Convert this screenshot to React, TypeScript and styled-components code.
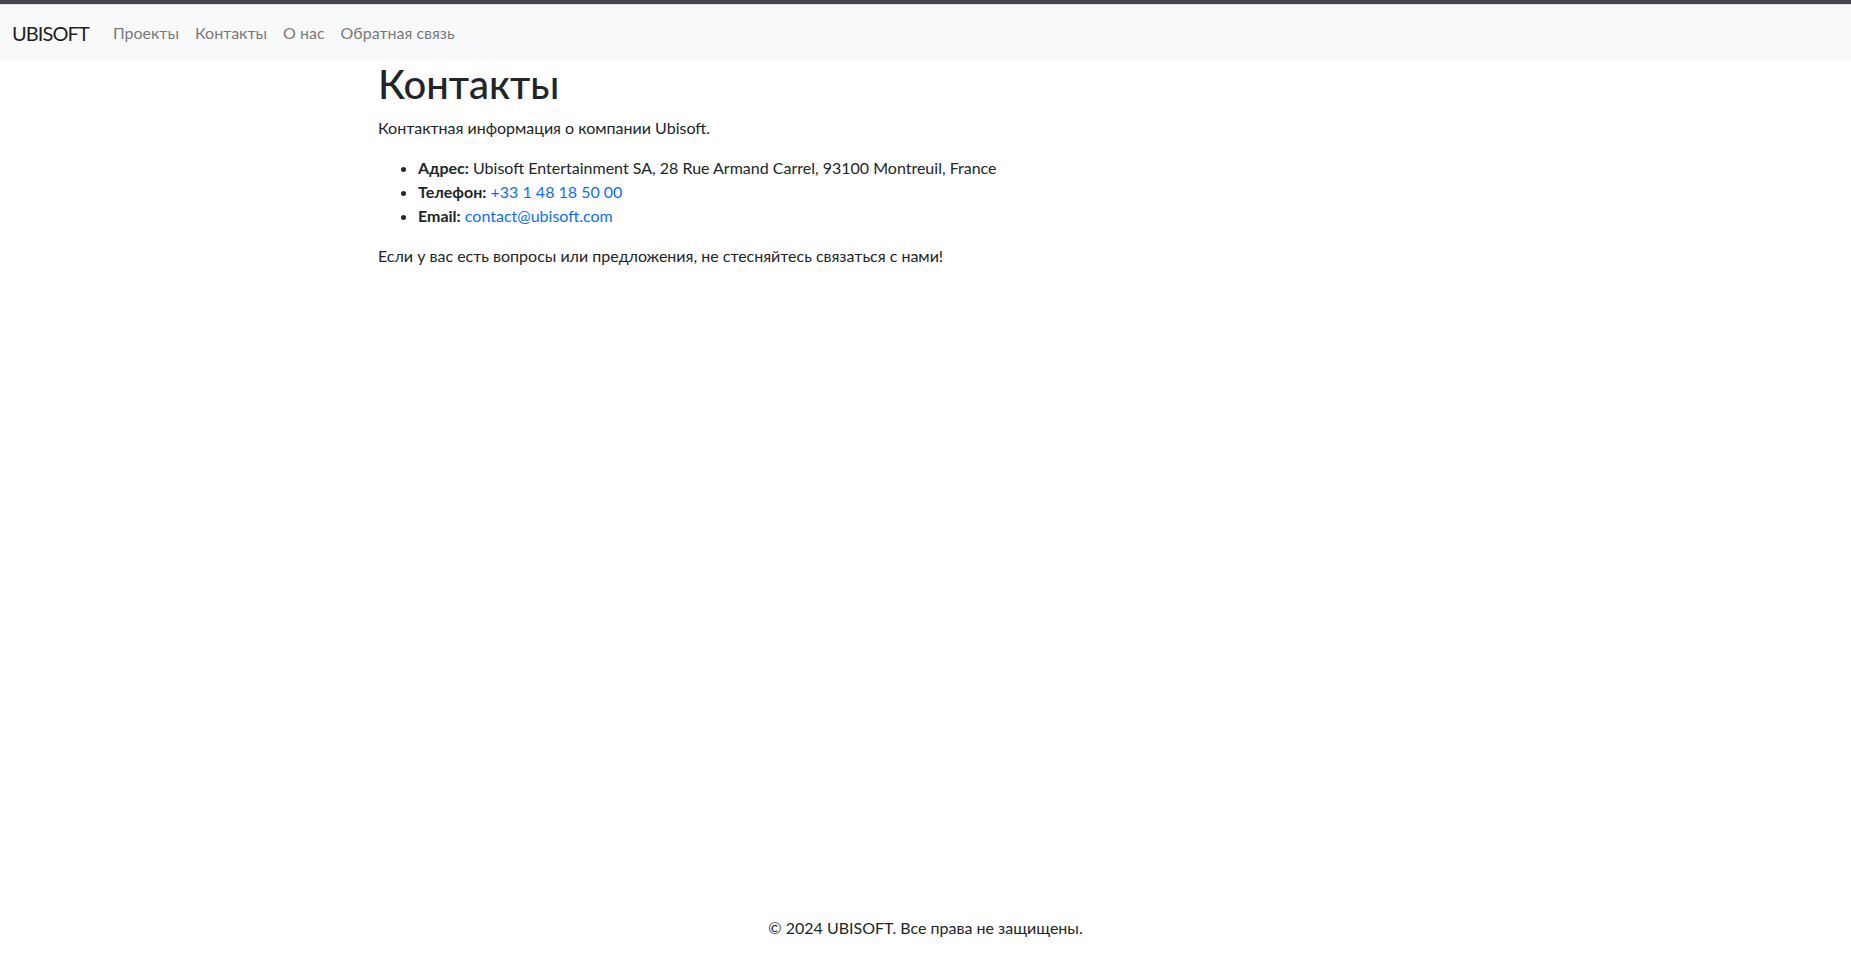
import React from "react";
import styled, { createGlobalStyle } from "styled-components";

const FONT = `Lato, "Segoe UI", Roboto, sans-serif`;

const Global = createGlobalStyle`
  html, body { margin: 0; padding: 0; }
  body {
    font-family: ${FONT};
    font-size: 16px;
    line-height: 1.5;
    color: #212529;
    background: #fff;
  }
  * { box-sizing: border-box; }
`;

const Page = styled.div`
  min-height: 955px;
  display: flex;
  flex-direction: column;
`;

const TopStrip = styled.div`
  height: 5px;
  background: #45454f;
  border-bottom: 1px solid #dcdde0;
`;

const Navbar = styled.nav`
  background: #f8f9fa;
  height: 55px;
  display: flex;
  align-items: center;
  padding: 0 12px;
`;

const Brand = styled.a`
  font-size: 20px;
  letter-spacing: -0.9px;
  color: rgba(0, 0, 0, 0.9);
  text-decoration: none;
  margin-right: 16px;
  line-height: 30px;
`;

const NavList = styled.ul`
  display: flex;
  list-style: none;
  margin: 0;
  padding: 0;
`;

const NavLink = styled.a`
  display: block;
  padding: 8px;
  color: rgba(0, 0, 0, 0.55);
  text-decoration: none;
  font-size: 16px;
`;

const Container = styled.main`
  width: 100%;
  max-width: 1119px;
  margin: 0 auto;
  padding: 0 12px;
  flex: 1;
`;

const Title = styled.h1`
  font-size: 40px;
  font-weight: 500;
  line-height: 1.2;
  margin: 0 0 8px;
`;

const Para = styled.p`
  margin: 0 0 16px;
`;

const List = styled.ul`
  margin: 0 0 16px;
  padding-left: 40px;
`;

const Link = styled.a`
  color: #0d6efd;
  text-decoration: none;
`;

const Footer = styled.footer`
  text-align: center;
  padding: 17px 0 15px;
  font-size: 16px;
`;

export default function App() {
  return (
    <Page>
      <Global />
      <TopStrip />
      <Navbar>
        <Brand href="#">UBISOFT</Brand>
        <NavList>
          <li><NavLink href="#">Проекты</NavLink></li>
          <li><NavLink href="#">Контакты</NavLink></li>
          <li><NavLink href="#">О нас</NavLink></li>
          <li><NavLink href="#">Обратная связь</NavLink></li>
        </NavList>
      </Navbar>
      <Container>
        <Title>Контакты</Title>
        <Para>Контактная информация о компании Ubisoft.</Para>
        <List>
          <li><strong>Адрес:</strong> Ubisoft Entertainment SA, 28 Rue Armand Carrel, 93100 Montreuil, France</li>
          <li><strong>Телефон:</strong> <Link href="#">+33 1 48 18 50 00</Link></li>
          <li><strong>Email:</strong> <Link href="#">contact@ubisoft.com</Link></li>
        </List>
        <Para>Если у вас есть вопросы или предложения, не стесняйтесь связаться с нами!</Para>
      </Container>
      <Footer>© 2024 UBISOFT. Все права не защищены.</Footer>
    </Page>
  );
}
